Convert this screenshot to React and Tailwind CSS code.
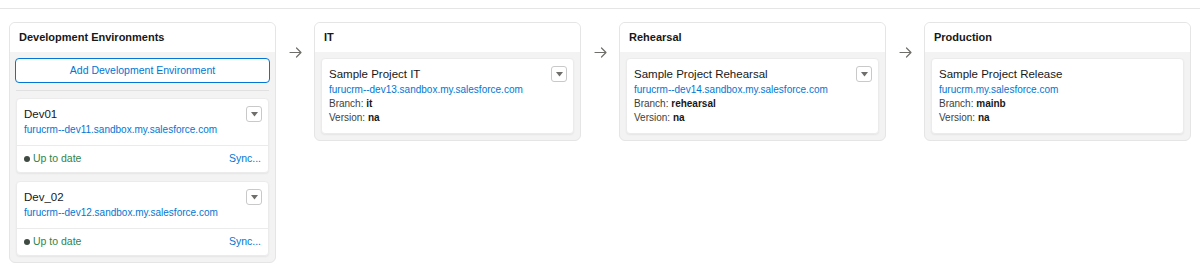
const FONT = "font-['Liberation_Sans',Arial,sans-serif]";

function ArrowRight() {
  return (
    <svg width="13" height="11" viewBox="0 0 13 11" fill="none" stroke="#706e6b" strokeWidth="1.2" strokeLinecap="round" strokeLinejoin="round">
      <path d="M1 5.5h11M7.5 1l4.5 4.5L7.5 10" />
    </svg>
  );
}

function MenuButton() {
  return (
    <button className="w-4 h-4 rounded-[3px] border border-[#c9c9c9] bg-white flex items-center justify-center shrink-0">
      <svg width="7" height="5" viewBox="0 0 7 5">
        <path d="M0 0h7L3.5 4.5z" fill="#706e6b" />
      </svg>
    </button>
  );
}

function DevCard({ name, url }) {
  return (
    <div className="bg-white rounded-[4px] border border-[#ebebeb] shadow-[0_1px_2px_rgba(0,0,0,0.06)]">
      <div className="flex items-start justify-between pl-[7px] pr-[6px] pt-[7px] pb-[8px]">
        <div>
          <div className="text-[11.5px] leading-[16px] text-[#181818]">{name}</div>
          <div className="text-[10px] leading-[15px] text-[#0176d3]">{url}</div>
        </div>
        <MenuButton />
      </div>
      <div className="border-t border-[#ebebeb] flex items-center justify-between px-[7px] h-[27px] text-[10.5px]">
        <span className="flex items-center gap-[3px] text-[#2e844a]">
          <span className="w-[6px] h-[6px] rounded-full bg-[#3e4a42]" />
          Up to date
        </span>
        <span className="text-[#0176d3]">Sync...</span>
      </div>
    </div>
  );
}

function EnvCard({ title, url, branch, menu = true }) {
  return (
    <div className="bg-white rounded-[4px] border border-[#ebebeb] shadow-[0_1px_2px_rgba(0,0,0,0.06)] flex items-start justify-between pl-[7px] pr-[6px] pt-[7px] pb-[8px]">
      <div>
        <div className="text-[11.5px] leading-[16px] text-[#181818]">{title}</div>
        <div className="text-[10px] leading-[15px] text-[#0176d3]">{url}</div>
        <div className="text-[10px] leading-[14px] text-[#3e3e3c]">
          Branch: <span className="font-bold text-[#181818]">{branch}</span>
        </div>
        <div className="text-[10px] leading-[14px] text-[#3e3e3c]">
          Version: <span className="font-bold text-[#181818]">na</span>
        </div>
      </div>
      {menu && <MenuButton />}
    </div>
  );
}

function Column({ title, children }) {
  return (
    <div className="w-[267px] shrink-0 rounded-[6px] border border-[#e5e5e5] bg-[#f3f3f3] overflow-hidden">
      <div className="bg-white h-[29px] flex items-center px-[9px] text-[11px] font-bold text-[#181818]">
        {title}
      </div>
      <div className="p-[6px] flex flex-col">{children}</div>
    </div>
  );
}

function Arrow() {
  return (
    <div className="w-[38px] shrink-0 flex justify-center pt-[25px]">
      <ArrowRight />
    </div>
  );
}

export default function App() {
  return (
    <div className={`${FONT} bg-white min-h-[273px] pt-2`}>
      <div className="border-t border-[#e5e5e5] pt-[13px] px-[9px] flex items-start">
        <Column title="Development Environments">
          <button className="-mx-px h-[25px] rounded-[4px] border border-[#0176d3] bg-white text-[10.5px] text-[#0176d3]">
            Add Development Environment
          </button>
          <div className="h-px bg-[#e0e0e0] my-[7px]" />
          <div className="flex flex-col gap-[8px]">
            <DevCard name="Dev01" url="furucrm--dev11.sandbox.my.salesforce.com" />
            <DevCard name="Dev_02" url="furucrm--dev12.sandbox.my.salesforce.com" />
          </div>
        </Column>
        <Arrow />
        <Column title="IT">
          <EnvCard title="Sample Project IT" url="furucrm--dev13.sandbox.my.salesforce.com" branch="it" />
        </Column>
        <Arrow />
        <Column title="Rehearsal">
          <EnvCard title="Sample Project Rehearsal" url="furucrm--dev14.sandbox.my.salesforce.com" branch="rehearsal" />
        </Column>
        <Arrow />
        <Column title="Production">
          <EnvCard title="Sample Project Release" url="furucrm.my.salesforce.com" branch="mainb" menu={false} />
        </Column>
      </div>
    </div>
  );
}
